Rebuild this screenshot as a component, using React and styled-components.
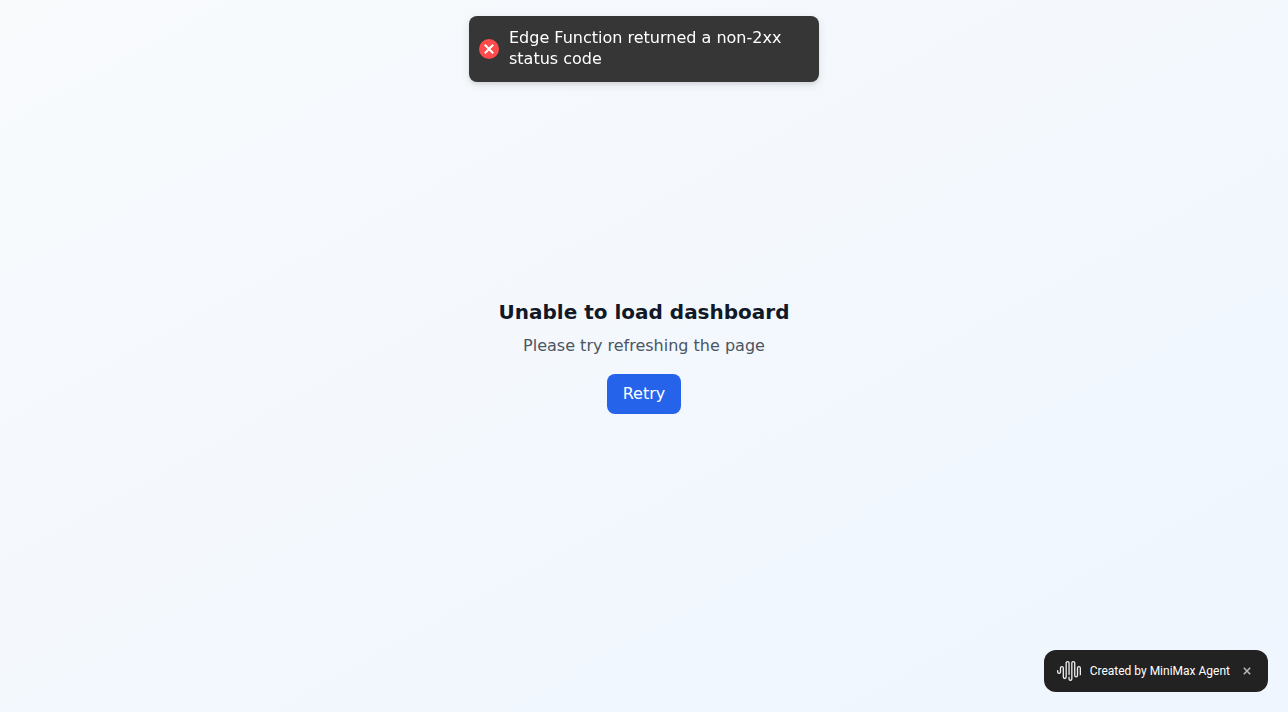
import React from "react";
import styled, { createGlobalStyle } from "styled-components";

const GlobalStyle = createGlobalStyle`
  *, *::before, *::after { box-sizing: border-box; }
  body { margin: 0; font-family: "DejaVu Sans", sans-serif; font-size: 16px; line-height: 24px; }
  h1, p { margin: 0; }
  button { font: inherit; border: 0; cursor: pointer; }
`;

const Page = styled.main`
  min-height: 100vh;
  display: flex;
  align-items: center;
  justify-content: center;
  background: linear-gradient(to bottom right, #f8fafc, #eff6ff);
`;

const Message = styled.section`
  text-align: center;
`;

const Title = styled.h1`
  margin-bottom: 8px;
  font-size: 20px;
  line-height: 28px;
  font-weight: 700;
  color: #111827;
`;

const Hint = styled.p`
  margin-bottom: 16px;
  color: #4b5563;
`;

const RetryButton = styled.button`
  padding: 8px 16px;
  border-radius: 8px;
  background: #2563eb;
  color: #fff;
`;

const ToastLayer = styled.div`
  position: fixed;
  top: 16px;
  left: 16px;
  right: 16px;
  display: flex;
  justify-content: center;
  pointer-events: none;
`;

const Toast = styled.div`
  display: flex;
  align-items: center;
  max-width: 350px;
  padding: 8px 10px;
  border-radius: 8px;
  background: #363636;
  color: #fff;
  line-height: 1.3;
  box-shadow: 0 3px 10px rgba(0, 0, 0, 0.1), 0 3px 3px rgba(0, 0, 0, 0.05);
  pointer-events: auto;
`;

const ToastIcon = styled.svg`
  flex: none;
  width: 20px;
  height: 20px;
`;

const ToastText = styled.p`
  flex: 1;
  margin: 4px 10px;
`;

const Badge = styled.aside`
  position: fixed;
  right: 20px;
  bottom: 20px;
  display: flex;
  align-items: center;
  gap: 8px;
  height: 42px;
  padding: 0 12px;
  border-radius: 12px;
  background: #222;
  color: #fff;
  font: 400 12px/18px Roboto, sans-serif;
`;

const Logo = styled.svg`
  width: 26px;
  height: 24px;
`;

const CloseButton = styled.button`
  display: grid;
  place-items: center;
  width: 18px;
  height: 18px;
  padding: 0;
  background: none;
  color: #bbb;
`;

const CloseIcon = styled.svg`
  width: 8px;
  height: 8px;
`;

export default function App() {
  return (
    <>
      <GlobalStyle />
      <Page>
        <Message>
          <Title>Unable to load dashboard</Title>
          <Hint>Please try refreshing the page</Hint>
          <RetryButton type="button">Retry</RetryButton>
        </Message>
      </Page>
      <ToastLayer>
        <Toast role="status">
          <ToastIcon viewBox="0 0 20 20" aria-hidden="true">
            <circle cx="10" cy="10" r="10" fill="#ff4b4b" />
            <path d="M5.800 5.800l8.400 8.400M14.200 5.800l-8.400 8.400" stroke="#fff" strokeWidth="2" />
          </ToastIcon>
          <ToastText>Edge Function returned a non-2xx status code</ToastText>
        </Toast>
      </ToastLayer>
      <Badge>
        <Logo viewBox="0 0 24 24" fill="#eee" aria-hidden="true">
          <path d="M16.278 2c1.156 0 2.093.927 2.093 2.070v12.501a.74.74 0 00.744.709.74.74 0 00.743-.709V9.099a2.060 2.060 0 012.071-2.049A2.060 2.060 0 0124 9.100v6.561a.649.649 0 01-.652.645.649.649 0 01-.653-.645V9.100a.762.762 0 00-.766-.758.762.762 0 00-.766.758v7.472a2.037 2.037 0 01-2.048 2.026 2.037 2.037 0 01-2.048-2.026v-12.500a.785.785 0 00-.788-.753.785.785 0 00-.789.752l-.001 15.904A2.037 2.037 0 0113.441 22a2.037 2.037 0 01-2.048-2.026V18.040c0-.356.292-.645.652-.645.36 0 .652.289.652.645v1.934c0 .263.142.506.372.638.23.131.514.131.744 0a.734.734 0 00.372-.638V4.070c0-1.143.937-2.070 2.093-2.070zm-5.674 0c1.156 0 2.093.927 2.093 2.070v11.523a.648.648 0 01-.652.645.648.648 0 01-.652-.645V4.070a.785.785 0 00-.789-.78.785.785 0 00-.789.78v14.013a2.060 2.060 0 01-2.070 2.048 2.060 2.060 0 01-2.071-2.048V9.100a.762.762 0 00-.766-.758.762.762 0 00-.766.758v3.800a2.060 2.060 0 01-2.071 2.049A2.060 2.060 0 010 12.900v-1.378c0-.357.292-.646.653-.646.36 0 .653.29.653.646V12.900c0 .418.343.757.766.757s.766-.339.766-.757V9.099a2.060 2.060 0 012.070-2.048 2.060 2.060 0 012.071 2.048v8.984c0 .419.343.758.767.758.423 0 .766-.339.766-.758V4.070c0-1.143.937-2.070 2.093-2.070z" />
        </Logo>
        <span>Created by MiniMax Agent</span>
        <CloseButton type="button" aria-label="Close">
          <CloseIcon viewBox="0 0 8 8" fill="none" stroke="currentColor" strokeWidth="1.500" aria-hidden="true">
            <path d="M.8.8l6.400 6.400M7.200.8L.8 7.200" />
          </CloseIcon>
        </CloseButton>
      </Badge>
    </>
  );
}
